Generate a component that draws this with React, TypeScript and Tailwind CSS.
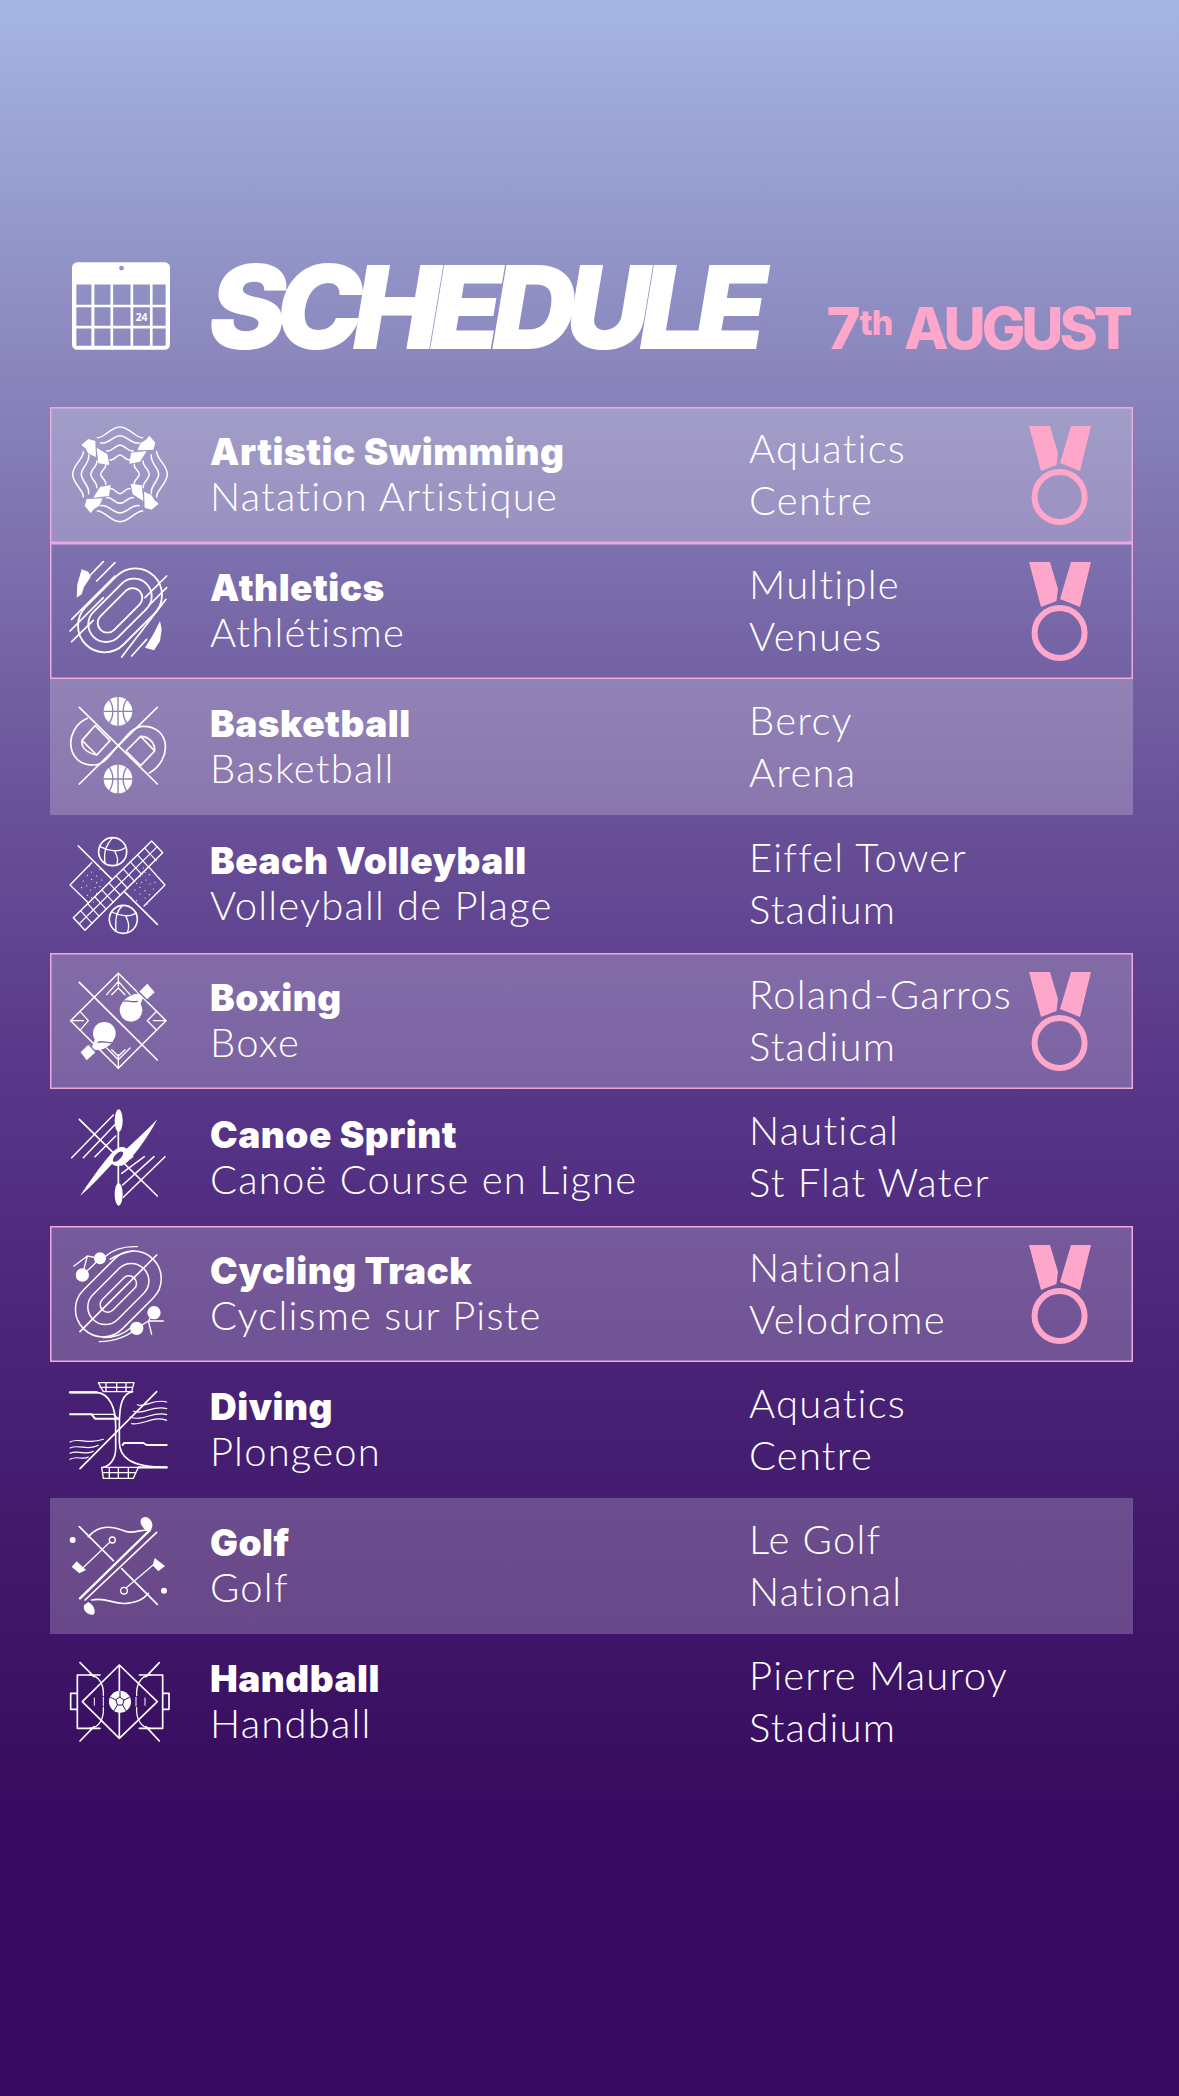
import React from "react";

const W = "#ffffff";

function Ic({ children }: { children: React.ReactNode }) {
  return (
    <svg viewBox="0 0 420 408" className="w-[140px] h-[136px] shrink-0" fill="none" stroke={W} strokeWidth={5} strokeLinecap="round" strokeLinejoin="round">
      {children}
    </svg>
  );
}

function Swim() {
  return (
    <Ic>
      <g transform="translate(30 24)">
        {[0, 90, 180, 270].map((r) => (
          <g key={r} transform={`rotate(${r} 180 178)`} strokeWidth={4.5}>
            <path d="M112 68 C132 70 152 36 180 36 C208 36 228 70 248 68" />
            <path d="M122 84 C145 88 160 62 180 62 C200 62 215 88 238 84" />
            <path d="M140 108 C155 112 165 90 180 91 C195 90 205 112 220 108" />
            <path d="M150 135 C162 138 170 120 180 120 C190 120 198 138 210 135" />
            <path d="M110 98 L142 118 L148 150 L115 145 Z" fill={W} stroke="none" />
            <path d="M64 90 L85 72 L106 78 L108 126 L86 116 L76 100 Z" fill={W} stroke="none" />
          </g>
        ))}
      </g>
    </Ic>
  );
}

function Athletics() {
  return (
    <Ic>
      <g transform="translate(30 24)">
        {[[290, 160, 80], [225, 106, 53], [165, 58, 29]].map(([w, h, r]) => (
          <rect key={w} x={180 - w / 2} y={178 - h / 2} width={w} height={h} rx={r} transform="rotate(-45 180 178)" strokeWidth={5.5} />
        ))}
        <path d="M130 32 L88 75 M165 35 L110 90 M35 205 L165 75 M30 240 L130 140 M35 272 L100 208" strokeWidth={5} />
        <path d="M320 75 L255 140 M320 110 L270 160 M318 145 L185 318 M260 265 L215 315" strokeWidth={5} />
        <path d="M50 140 L52 100 L65 55 L85 62 L92 78 L72 108 L65 130 Z" fill={W} stroke="none" />
        <path d="M255 290 L280 250 L300 210 L305 235 L300 270 L282 298 Z" fill={W} stroke="none" />
      </g>
    </Ic>
  );
}

function Basket() {
  const bg = "#8d7fb4";
  const ball = (cy: number, k: number) => (
    <g key={k}>
      <circle cx={204} cy={cy} r={43} fill={W} stroke="none" />
      <path d={`M204 ${cy - 43} V${cy + 43} M161 ${cy} H247 M178 ${cy - 35} C192 ${cy - 15} 192 ${cy + 15} 178 ${cy + 35} M230 ${cy - 35} C216 ${cy - 15} 216 ${cy + 15} 230 ${cy + 35}`} stroke={bg} strokeWidth={4} />
    </g>
  );
  return (
    <Ic>
      {ball(97, 0)}
      {ball(300, 1)}
      <path d="M88 85 L322 315 M322 85 L88 315" />
      <path d="M112 118 C40 150 45 262 135 258 C165 256 185 220 204 200 C225 180 245 143 278 142 C360 140 370 240 298 282" />
      <path d="M135 140 L180 185 L140 228 L96 184 Z M96 184 C92 208 115 222 140 228" />
      <path d="M272 172 L228 216 L272 260 L314 216 Z M272 172 C295 172 315 190 314 216" />
    </Ic>
  );
}

const dotsL = [[100, 195], [112, 178], [125, 168], [125, 190], [140, 180], [140, 200], [155, 192], [95, 215], [110, 210], [122, 222], [135, 215], [150, 212], [112, 238], [125, 245], [140, 232], [130, 258], [165, 170], [150, 160], [118, 150]];

function Volley() {
  const net: React.ReactNode[] = [];
  for (let i = 1; i < 11; i++) {
    const t = i / 11;
    const x1 = 70 + 235 * t, y1 = 305 - 230 * t;
    net.push(<path key={i} d={`M${x1} ${y1} L${x1 + 35} ${y1 + 38}`} strokeWidth={3.5} />);
  }
  return (
    <Ic>
      <path d="M85 90 L322 325" />
      <path d="M125 140 L60 207 L125 270 M285 140 L345 207 L282 270" strokeWidth={4} />
      <g fill="#5f4a95">
        <path d="M70 305 L305 75 L338 110 L105 343 Z" strokeWidth={4.5} />
      </g>
      <path d="M87 324 L322 92" strokeWidth={3.5} />
      {net}
      <circle cx={188} cy={107} r={42} fill="#5f4a95" />
      <path d="M188 65 C170 85 160 105 165 140 M150 92 C175 105 205 110 225 95 M195 108 C205 125 205 135 200 147" strokeWidth={4} />
      <circle cx={220} cy={310} r={42} fill="#5f4a95" />
      <path d="M218 268 C200 285 195 305 198 345 M185 288 C210 300 240 305 258 290 M228 302 C238 320 238 335 232 350" strokeWidth={4} />
      <g fill={W} stroke="none">
        {dotsL.map(([x, y], i) => (
          <g key={i}>
            <circle cx={x} cy={y} r={1.8} />
            <circle cx={410 - x} cy={414 - y} r={1.8} />
          </g>
        ))}
      </g>
    </Ic>
  );
}

function Boxing() {
  const bg = "#7c64a0";
  return (
    <Ic>
      <path d="M205 61 L348 203 L205 346 L62 203 Z" strokeWidth={4.5} />
      <path d="M88 88 L322 321" />
      <path d="M205 61 V100 M170 125 L205 85 L240 125 M185 125 L205 105 L225 125 M205 346 V305 M170 285 L205 320 L240 285 M185 290 L205 310 L225 290 M62 203 H100 M90 175 L115 203 L90 232 M348 203 H310 M320 175 L292 203 L320 232" strokeWidth={4} />
      <g stroke="none" fill={W}>
        <circle cx={243} cy={172} r={34} />
        <path d="M216 150 C232 126 262 116 282 126 L262 180 Z" />
        <path d="M266 118 L292 92 L314 118 L288 142 Z" />
        <circle cx={163} cy={241} r={34} />
        <path d="M190 263 C174 287 144 297 124 287 L144 233 Z" />
        <path d="M118 272 L92 298 L110 322 L138 296 Z" />
      </g>
      <path d="M222 145 C235 140 245 150 262 145 M184 268 C170 272 160 262 144 268 M263 114 L295 145 M112 270 L142 302" stroke={bg} strokeWidth={4} />
    </Ic>
  );
}

function Canoe() {
  return (
    <Ic>
      <path d="M88 88 L322 318" />
      <path d="M65 203 L190 75 M100 203 L196 103 M135 200 L197 138 M220 322 L345 200 M218 285 L312 200 M215 250 L283 200 M215 225 L248 200" strokeWidth={4.5} />
      <path d="M205 100 V300" strokeWidth={5} />
      <g fill={W} stroke="none">
        <ellipse cx={206} cy={92} rx={12} ry={34} />
        <ellipse cx={206} cy={313} rx={12} ry={34} />
        <path d="M90 318 C125 265 165 210 188 186 C205 168 222 168 230 176 C260 150 295 115 322 88 C295 140 258 190 232 216 C215 232 195 230 186 222 C155 255 125 290 90 318 Z" />
      </g>
      <ellipse cx={204} cy={200} rx={9} ry={20} transform="rotate(45 204 200)" fill="#553787" stroke="none" />
    </Ic>
  );
}

function Cycling() {
  return (
    <Ic>
      {[[295, 165, 82], [215, 105, 52], [135, 45, 22]].map(([w, h, r]) => (
        <rect key={w} x={205 - w / 2} y={204 - h / 2} width={w} height={h} rx={r} transform="rotate(-45 205 204)" strokeWidth={4.5} />
      ))}
      <path d="M90 317 L320 87" />
      <path d="M165 92 C190 70 225 60 262 62 M180 100 C205 85 225 78 250 75 M148 347 C190 347 240 330 268 300 M160 335 C195 335 225 322 245 303" strokeWidth={4} />
      <g fill={W} stroke="none">
        <circle cx={150} cy={97} r={18} />
        <circle cx={97} cy={147} r={20} />
        <circle cx={260} cy={307} r={20} />
        <circle cx={312} cy={260} r={20} />
      </g>
      <path d="M72 120 L112 90 L150 97 L125 122 L97 147 L112 90 M260 307 L295 285 L312 260 M295 285 L305 325 M295 285 L340 285" strokeWidth={4} />
    </Ic>
  );
}

function Diving() {
  return (
    <Ic>
      <path d="M145 62 H252 L245 89 H160 Z M168 62 V89 M200 62 V89 M228 62 V89 M150 76 H248" strokeWidth={4} />
      <path d="M155 316 H265 L250 349 H160 Z M178 316 V349 M205 316 V349 M235 316 V349 M157 332 H258" strokeWidth={4} />
      <path d="M60 91 H140 C180 95 197 140 197 190 V260 C197 290 180 312 160 316" strokeWidth={5} />
      <path d="M248 89 C215 95 208 130 208 190 V240 C208 285 240 316 350 316" strokeWidth={5} />
      <path d="M60 91 H140 M265 316 H350" strokeWidth={7} />
      <path d="M60 157 H125 L135 170 H205 M218 249 L222 243 H280 L290 249 H350" strokeWidth={6} />
      <path d="M125 157 H190 M205 170 L190 157" strokeWidth={4} />
      <path d="M320 89 L90 320" strokeWidth={5} />
      <path d="M262 128 C285 140 310 108 350 120 M250 148 C280 160 310 128 350 140 M240 165 C280 180 310 145 350 158 M245 185 C280 190 310 160 350 175" strokeWidth={3.5} />
      <path d="M60 240 C85 225 115 250 160 232 M60 258 C85 245 115 268 145 250 M60 274 C85 262 110 282 130 268 M60 292 C80 280 100 295 115 285" strokeWidth={3.5} />
    </Ic>
  );
}

function Golf() {
  return (
    <Ic>
      <path d="M88 86 L190 188 M215 212 L322 319" />
      <path d="M90 301 L300 96" strokeWidth={7} />
      <path d="M105 306 L320 103" strokeWidth={5} />
      <path d="M115 116 C150 76 190 86 230 101 C250 106 270 96 295 96" />
      <path d="M125 306 C170 296 190 321 230 316 C260 314 280 306 295 286" />
      <circle cx={187} cy={126} r={9} strokeWidth={4} />
      <circle cx={222} cy={278} r={10} strokeWidth={4} />
      <path d="M180 132 L92 216 M228 270 L320 192" strokeWidth={3.5} />
      <g fill={W} stroke="none">
        <circle cx={68} cy={126} r={9} />
        <circle cx={342} cy={278} r={9} />
        <path d="M65 206 L80 190 L108 216 L88 226 Z" />
        <path d="M314 180 L345 204 L325 220 L308 202 Z" />
        <path d="M272 66 C282 48 305 60 307 80 C308 92 300 100 296 102 C285 95 270 85 272 66 Z" />
        <path d="M115 312 C135 322 138 345 130 350 C110 352 98 335 102 322 Z" />
      </g>
    </Ic>
  );
}

function Handball() {
  const bg = "#3e1368";
  return (
    <Ic>
      <path d="M208 93 L322 203 L208 313 L97 203 Z M208 93 V313" />
      <path d="M90 86 L132 128 M328 86 L288 128 M90 321 L132 278 M328 321 L288 278" />
      <path d="M150 123 H82 V283 H150 M268 123 H338 V283 H268" strokeWidth={5} />
      <path d="M82 178 H62 V226 H82 M338 178 H357 V226 H338" />
      <path d="M118 123 C150 125 162 155 160 185 M160 221 C162 250 150 282 118 283 M302 123 C270 125 258 155 260 185 M260 221 C258 250 270 282 302 283" strokeWidth={4} />
      <path d="M133 192 V214 M160 190 V216 M285 192 V214 M258 190 V216" strokeWidth={3} />
      <circle cx={210} cy={203} r={33} fill={W} stroke="none" />
      <path d="M210 190 L222 198 L218 213 H202 L198 198 Z M210 190 V172 M222 198 L238 190 M218 213 L228 230 M202 213 L192 230 M198 198 L182 190" stroke={bg} strokeWidth={3} fill="none" />
    </Ic>
  );
}

function Medal() {
  return (
    <svg viewBox="0 0 63 99" className="w-[63px] h-[99px] shrink-0" fill="#ffa6cb">
      <path d="M0 0 H21 L29 27 L27.5 39 L12 45 Z" />
      <path d="M42 0 H62 L51 45 L31 37 Z" />
      <circle cx={30.6} cy={71} r={25} fill="none" stroke="#ffa6cb" strokeWidth={6} />
    </svg>
  );
}

function Calendar() {
  return (
    <svg viewBox="35 35 293 262" className="w-[98px] h-[88px] shrink-0">
      <path
        fillRule="evenodd"
        fill={W}
        d="M51 35 H312 A16 16 0 0 1 328 51 V281 A16 16 0 0 1 312 297 H51 A16 16 0 0 1 35 281 V51 A16 16 0 0 1 51 35 Z
        M176 53 a7 7 0 1 0 14 0 a7 7 0 1 0 -14 0 Z
        M48 102 H93 V162 H48 Z M102 102 H150 V162 H102 Z M158 102 H210 V162 H158 Z M218 102 H268 V162 H218 Z M276 102 H315 V162 H276 Z
        M48 170 H93 V225 H48 Z M102 170 H150 V225 H102 Z M158 170 H210 V225 H158 Z M218 170 H268 V225 H218 Z M276 170 H315 V225 H276 Z
        M48 233 H93 V285 H48 Z M102 233 H150 V285 H102 Z M158 233 H210 V285 H158 Z M218 233 H268 V285 H218 Z M276 233 H315 V285 H276 Z"
      />
      <text x={243} y={211} textAnchor="middle" fontSize={31} fontWeight={700} fill={W} fontFamily="'Noto Sans', sans-serif">24</text>
    </svg>
  );
}

type Row = {
  icon: React.ReactNode;
  name: string;
  fr: string;
  v1: string;
  v2: string;
  cls: string;
  medal?: boolean;
};

const FILL_BORDER = "bg-white/[0.22] ring-[1.5px] ring-inset ring-[#eda9db]";
const BORDER = "ring-[1.5px] ring-inset ring-[#eda9db]";
const FILL = "bg-white/[0.22]";

const rows: Row[] = [
  { icon: <Swim />, name: "Artistic Swimming", fr: "Natation Artistique", v1: "Aquatics", v2: "Centre", cls: `h-[136px] ${FILL_BORDER}`, medal: true },
  { icon: <Athletics />, name: "Athletics", fr: "Athlétisme", v1: "Multiple", v2: "Venues", cls: `h-[136px] ${BORDER}`, medal: true },
  { icon: <Basket />, name: "Basketball", fr: "Basketball", v1: "Bercy", v2: "Arena", cls: `h-[136px] ${FILL}` },
  { icon: <Volley />, name: "Beach Volleyball", fr: "Volleyball de Plage", v1: "Eiffel Tower", v2: "Stadium", cls: "h-[138px]" },
  { icon: <Boxing />, name: "Boxing", fr: "Boxe", v1: "Roland-Garros", v2: "Stadium", cls: `h-[136px] ${FILL_BORDER}`, medal: true },
  { icon: <Canoe />, name: "Canoe Sprint", fr: "Canoë Course en Ligne", v1: "Nautical", v2: "St Flat Water", cls: "h-[137px]" },
  { icon: <Cycling />, name: "Cycling Track", fr: "Cyclisme sur Piste", v1: "National", v2: "Velodrome", cls: `h-[136px] ${FILL_BORDER}`, medal: true },
  { icon: <Diving />, name: "Diving", fr: "Plongeon", v1: "Aquatics", v2: "Centre", cls: "h-[136px]" },
  { icon: <Golf />, name: "Golf", fr: "Golf", v1: "Le Golf", v2: "National", cls: `h-[136px] ${FILL}` },
  { icon: <Handball />, name: "Handball", fr: "Handball", v1: "Pierre Mauroy", v2: "Stadium", cls: "h-[136px]" },
];

export default function App() {
  return (
    <div className="w-[1179px] h-[2096px] overflow-hidden text-white font-['Lato',sans-serif] [font-variant-ligatures:none] bg-[linear-gradient(180deg,#a4b5e4_0%,#a2b0e0_2%,#8f8fc3_14%,#7a6cab_28%,#6a5299_38%,#573688_52%,#4a2478_64%,#3f1769_76%,#380c60_86%,#380c60_100%)]">
      <header className="h-[407px] pl-[72px] pr-[47px] pb-[57px] flex items-end">
        <Calendar />
        <h1 className="ml-[39px] text-[116px] leading-[85px] h-[85px] font-black italic font-['Inter',sans-serif] tracking-[-10px]">SCHEDULE</h1>
        <div className="ml-auto text-[#ffa6cb] font-['Inter',sans-serif] font-extrabold text-[58px] leading-[44px] h-[44px] tracking-[-1px] whitespace-nowrap">
          7<sup className="text-[34px] align-baseline relative -top-[14px]">th</sup> <span className="tracking-[-4px] mr-[3px]">AUGUST</span>
        </div>
      </header>
      <main className="mx-[50px] w-[1083px] flex flex-col">
        {rows.map((r) => (
          <div key={r.name} className={`flex items-center ${r.cls}`}>
            {r.icon}
            <div className="pl-[20px] w-[559px] shrink-0 -mt-[2px]">
              <div className="text-[37px] leading-[44px] font-black font-['Inter',sans-serif] tracking-[0.5px] whitespace-nowrap">{r.name}</div>
              <div className="text-[40px] leading-[44px] font-light tracking-[1.2px] whitespace-nowrap">{r.fr}</div>
            </div>
            <div className="text-[40px] leading-[52px] font-light tracking-[1.2px] whitespace-nowrap w-[280px] shrink-0 -mt-[3px]">
              <div>{r.v1}</div>
              <div>{r.v2}</div>
            </div>
            {r.medal && <Medal />}
          </div>
        ))}
      </main>
    </div>
  );
}
